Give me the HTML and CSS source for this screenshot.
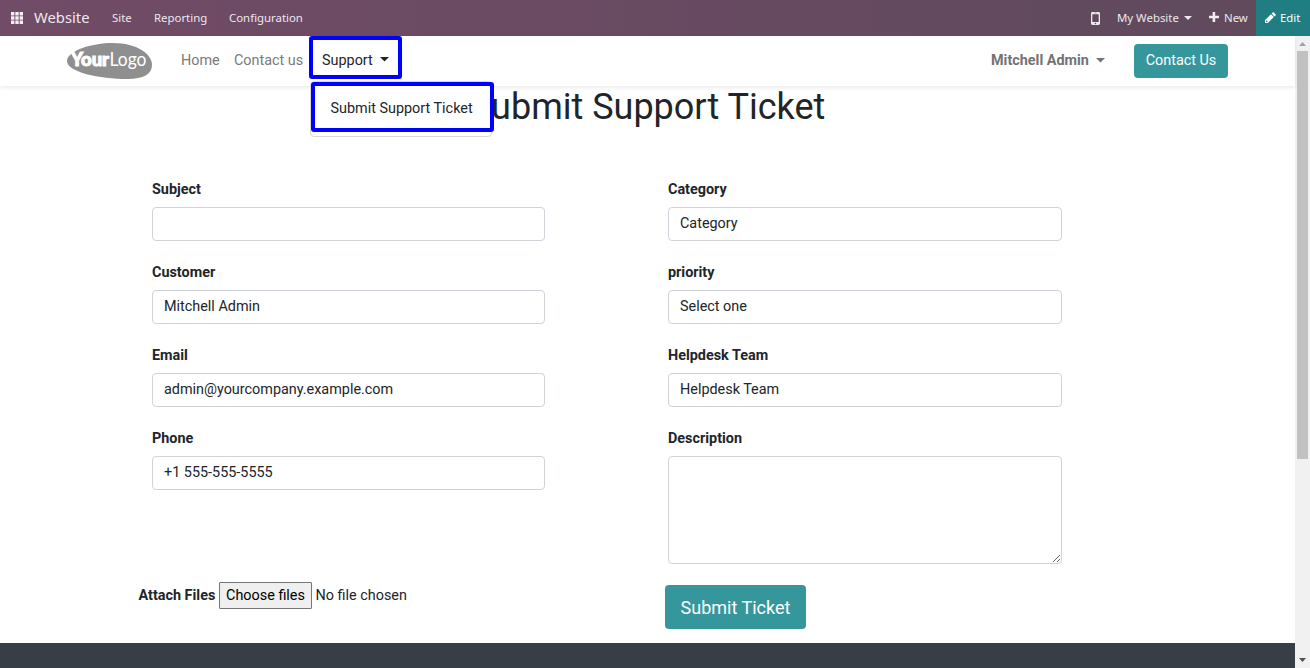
FILE: index.html
```html
<!DOCTYPE html>
<html lang="en">
<head>
<meta charset="utf-8">
<title>Submit Support Ticket</title>
<link rel="stylesheet" href="styles.css">
</head>
<body>
<nav class="topbar">
  <svg class="apps-icon" width="12" height="12" viewBox="0 0 12 12" fill="#f3eff2"><path d="M0 0h3.4v3.4H0zM4.3 0h3.4v3.4H4.3zM8.6 0H12v3.4H8.6zM0 4.3h3.4v3.4H0zM4.3 4.3h3.4v3.4H4.3zM8.6 4.3H12v3.4H8.6zM0 8.6h3.4V12H0zM4.3 8.6h3.4V12H4.3zM8.6 8.6H12V12H8.6z"/></svg>
  <span class="brand">Website</span>
  <span class="top-item site">Site</span>
  <span class="top-item reporting">Reporting</span>
  <span class="top-item configuration">Configuration</span>
  <div class="systray">
    <svg class="mobile-icon" width="9" height="13" viewBox="0 0 9 14" preserveAspectRatio="none"><path fill="#eee9ec" fill-rule="evenodd" d="M1.500 0h6Q9 0 9 1.500v11Q9 14 7.500 14h-6Q0 14 0 12.500v-11Q0 0 1.500 0zM1.300 2.300v8.400h6.400V2.300zM3.300.8v.6h2.400V.8zM4.500 11.600a.8.8 0 1 0 0 1.600.8.8 0 0 0 0-1.600z"/></svg>
    <span class="top-item my-website">My Website</span>
    <svg class="top-caret" width="8" height="4" viewBox="0 0 8 4"><path d="M0 0h8L4 4z" fill="#eee9ec"/></svg>
    <svg class="plus-icon" width="10" height="10" viewBox="0 0 10 10"><path d="M3.600 0h2.600v3.700H10v2.500H6.200V10H3.600V6.200H0V3.700h3.600z" fill="#f0ecef"/></svg>
    <span class="top-item new">New</span>
    <div class="edit">
      <svg class="pencil" width="11" height="11" viewBox="0 0 11 11" fill="#fff"><path d="M7.800.4Q8.300 0 8.800.4l1.800 1.800q.5.500 0 1L9.400 4.400 6.600 1.600z"/><path fill-rule="evenodd" d="M6 2.200 8.800 5l-5.900 5.900H0V8zM1.100 8.700v1.200h1.200l.5-.5L1.600 8.200z"/></svg>
      <span class="top-item edit-label">Edit</span>
    </div>
  </div>
</nav>
<div class="viewport">
  <div class="page">
    <header class="site-header">
      <svg class="logo" width="86" height="36" viewBox="0 0 86 36">
        <path d="M0 18C0 8 24 0 46 0c24 0 39 11 39 22 0 9-9 14-24 14C32 36 0 29 0 18z" fill="#8f8f8f"/>
        <text x="4" y="23" class="logo-your" textLength="38" lengthAdjust="spacingAndGlyphs">Your</text>
        <text x="42.500" y="23" class="logo-name" textLength="37" lengthAdjust="spacingAndGlyphs">Logo</text>
      </svg>
      <a class="nav-link home">Home</a>
      <a class="nav-link contact">Contact us</a>
      <div class="support">
        <a class="nav-link active">Support</a>
        <svg class="support-caret" width="10" height="5" viewBox="0 0 10 5"><path d="M0 0h9L4.500 4.500z" fill="#212529"/></svg>
        <div class="dropdown"><a class="dropdown-item">Submit Support Ticket</a></div>
      </div>
      <div class="user"><b class="nav-link">Mitchell Admin</b><svg class="user-caret" width="10" height="5" viewBox="0 0 10 5"><path d="M0 0h9L4.500 4.500z" fill="#737373"/></svg></div>
      <a class="btn contact-btn">Contact Us</a>
    </header>
    <main>
      <h1>Submit Support Ticket</h1>
      <form class="ticket-form">
        <div class="column">
          <label>Subject</label><div class="field"></div>
          <label>Customer</label><div class="field">Mitchell Admin</div>
          <label>Email</label><div class="field">admin@yourcompany.example.com</div>
          <label>Phone</label><div class="field">+1 555-555-5555</div>
        </div>
        <div class="column">
          <label>Category</label><div class="field">Category</div>
          <label>priority</label><div class="field">Select one</div>
          <label>Helpdesk Team</label><div class="field">Helpdesk Team</div>
          <label>Description</label><textarea class="field description"></textarea>
        </div>
      </form>
      <div class="actions">
        <b class="attach">Attach Files</b>
        <button class="choose" type="button">Choose files</button>
        <span class="no-file">No file chosen</span>
        <a class="btn submit">Submit Ticket</a>
      </div>
    </main>
    <footer></footer>
  </div>
  <div class="scrollbar">
    <svg width="15" height="15" viewBox="0 0 15 15"><path d="M4 10h7L7.500 6z" fill="#a3a3a3"/></svg>
    <div class="thumb"></div>
    <svg class="down" width="15" height="15" viewBox="0 0 15 15"><path d="M4 5h7L7.500 9z" fill="#505050"/></svg>
  </div>
</div>
</body>
</html>
```

FILE: styles.css
```css
* { box-sizing: border-box; }
body { margin: 0; height: 668px; overflow: hidden; background: #fff; color: #212529; font: 14.4px/21px Roboto, sans-serif; }
svg { display: block; flex: none; }
.topbar { height: 36px; display: flex; align-items: center; padding-left: 11px; background: linear-gradient(90deg, #714b67, #5f4a5c); color: #eee8ec; font-family: "Noto Sans", sans-serif; white-space: nowrap; }
.brand { width: 78px; margin-left: 11px; padding-bottom: 2px; font-size: 14.8px; }
.top-item { padding-bottom: 2px; font-size: 11.4px; }
.site { width: 42px; }
.reporting { width: 75px; }
.systray { display: flex; align-items: center; margin-left: auto; height: 36px; }
.my-website { width: 67px; margin-left: 17px; }
.plus-icon { margin: 0 0 2px 17px; }
.new { width: 32px; margin-left: 5px; }
.edit { width: 54px; height: 36px; padding-left: 9px; gap: 4px; display: flex; align-items: center; background: #207e82; color: #fff; }
.pencil { margin-bottom: 2px; }
.viewport { display: flex; height: 632px; }
.page { width: 1295px; display: flex; flex-direction: column; }
.site-header { height: 50px; display: flex; align-items: flex-start; padding-left: 67px; box-shadow: 0 2px 4px rgba(0, 0, 0, .075); position: relative; z-index: 1; background: #fff; }
.logo { margin-top: 7px; }
.logo-your { font: 900 18px Lato, sans-serif; fill: #fff; stroke: #fff; stroke-width: 1px; }
.logo-name { font: 400 19px Lato, sans-serif; fill: #fff; }
.nav-link { color: #7a7a7a; line-height: 21px; white-space: nowrap; }
.home { width: 53px; margin: 14px 0 0 28px; }
.contact { width: 75px; margin-top: 14px; }
.support { position: relative; width: 93px; height: 43px; border: 4px solid #00f; border-radius: 3px; padding: 0 0 0 9px; display: flex; align-items: center; gap: 7px; }
.active { color: #212529; margin-top: 5px; }
.support-caret { margin-top: 4px; }
.dropdown { position: absolute; top: 41px; left: -3px; width: 182px; height: 56px; background: #fff; border: 1px solid #d9d9d9; border-radius: 4px; }
.dropdown-item { display: block; width: 183px; height: 50px; padding: 12px 0 0 15.5px; border: 4px solid #00f; border-radius: 3px; white-space: nowrap; }
.user { width: 115px; margin: 14px 28px 0 auto; display: flex; align-items: center; gap: 7px; }
.user .nav-link { color: #737373; }
.user-caret { margin-bottom: 1px; }
.btn { background: #35979c; color: #fff; border-radius: 4px; text-align: center; white-space: nowrap; }
.contact-btn { width: 94px; height: 34px; margin: 8px 67px 0 0; line-height: 34px; }
main { height: 557px; }
h1 { margin: 0; height: 89px; font-size: 36px; font-weight: 400; line-height: 43px; text-align: center; }
.ticket-form { display: grid; grid-template-columns: 393px 394px; gap: 123px; padding-left: 152px; height: 407px; }
label { display: block; height: 32px; padding-top: 4px; font-weight: 700; }
.column { display: flex; flex-direction: column; }
.field { height: 34px; flex: none; margin: 0 0 17px; padding: 6px 11px; border: 1px solid #ced4da; border-radius: 4px; line-height: 20px; background: #fff; }
.description { height: 108px; margin: 0; outline: 0; resize: vertical; font: inherit; }
.actions { display: flex; align-items: flex-start; padding-left: 138.500px; white-space: nowrap; }
.attach { width: 80.500px; padding-top: 3px; }
.choose { width: 93px; height: 27px; margin: 0; padding: 0; background: #efefef; color: #000; border: 1px solid #767676; border-radius: 1px; font: inherit; }
.no-file { width: 349.500px; margin-left: 3.500px; padding-top: 3px; }
.submit { width: 141px; height: 44px; margin-top: 3px; line-height: 46px; font-size: 18px; }
footer { height: 25px; background: #383e45; }
.scrollbar { width: 15px; height: 632px; display: flex; flex-direction: column; background: #f1f1f1; }
.thumb { width: 11px; height: 408px; margin-left: 2px; background: #c1c1c1; }
.down { margin-top: auto; }
```
